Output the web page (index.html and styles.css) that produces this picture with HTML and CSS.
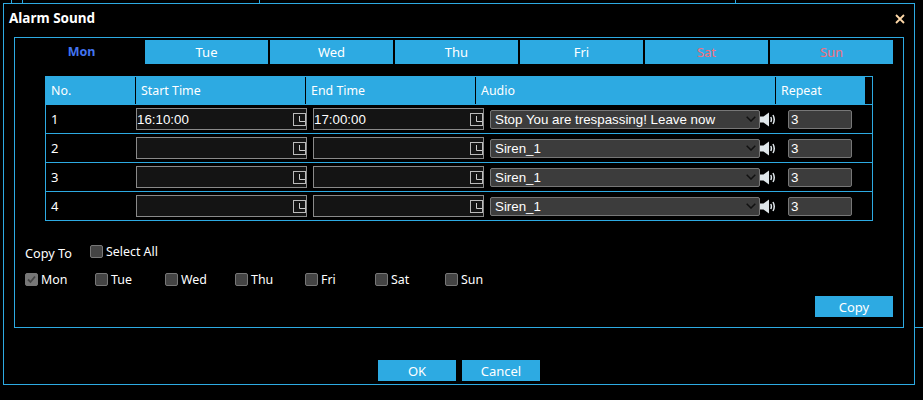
FILE: index.html
```html
<!DOCTYPE html>
<html lang="en">
<head>
<meta charset="utf-8">
<title>Alarm Sound</title>
<link rel="stylesheet" href="styles.css">
</head>
<body>
<div class="backdrop" aria-hidden="true">
  <i class="vline v1"></i><i class="vline v2"></i><i class="vline v3"></i><i class="vline v4"></i><i class="hline"></i>
</div>
<section class="dialog">
  <header class="titlebar">
    <h1 class="title">Alarm Sound</h1>
    <svg class="close" width="10" height="10" viewBox="0 0 10 10"><path d="M1 1L9 9M9 1L1 9" stroke="#ffd8a8" stroke-width="1.8" fill="none"/></svg>
  </header>
  <div class="panel">
    <nav class="tabs">
      <div class="tab active">Mon</div>
      <div class="tab">Tue</div>
      <div class="tab">Wed</div>
      <div class="tab">Thu</div>
      <div class="tab">Fri</div>
      <div class="tab weekend">Sat</div>
      <div class="tab weekend">Sun</div>
    </nav>
    <div class="table">
      <div class="thead">
        <div class="th th-no">No.</div>
        <div class="th th-time">Start Time</div>
        <div class="th th-time">End Time</div>
        <div class="th th-audio">Audio</div>
        <div class="th th-repeat">Repeat</div>
      </div>
      <div class="row">
        <div class="no">1</div>
        <div class="time"><input class="time-input" value="16:10:00"><span class="clock"><svg width="7" height="7" viewBox="0 0 7 7"><path d="M1.5 0V5.500H7" stroke="#ccc" fill="none"/></svg></span></div>
        <div class="time"><input class="time-input" value="17:00:00"><span class="clock"><svg width="7" height="7" viewBox="0 0 7 7"><path d="M1.5 0V5.500H7" stroke="#ccc" fill="none"/></svg></span></div>
        <div class="audio"><select class="audio-select"><option>Stop You are trespassing! Leave now</option></select><svg class="chevron" width="10" height="6" viewBox="0 0 10 6"><path d="M.7.7L5 5L9.3.7" stroke="#111" stroke-width="1.5" fill="none"/></svg></div>
        <svg class="speaker" width="16" height="15" viewBox="0 0 16 15"><path d="M0 4.500H3.500L9 .5V14.500L3.500 10.500H0Z" fill="#dfe6ea"/><path d="M10.800 5Q12 7.500 10.800 10M13 3Q15.500 7.500 13 12" stroke="#dfe6ea" stroke-width="1.500" fill="none"/></svg>
        <input class="repeat" value="3">
      </div>
      <div class="row">
        <div class="no">2</div>
        <div class="time"><input class="time-input" value=""><span class="clock"><svg width="7" height="7" viewBox="0 0 7 7"><path d="M1.5 0V5.500H7" stroke="#ccc" fill="none"/></svg></span></div>
        <div class="time"><input class="time-input" value=""><span class="clock"><svg width="7" height="7" viewBox="0 0 7 7"><path d="M1.5 0V5.500H7" stroke="#ccc" fill="none"/></svg></span></div>
        <div class="audio"><select class="audio-select"><option>Siren_1</option></select><svg class="chevron" width="10" height="6" viewBox="0 0 10 6"><path d="M.7.7L5 5L9.3.7" stroke="#111" stroke-width="1.5" fill="none"/></svg></div>
        <svg class="speaker" width="16" height="15" viewBox="0 0 16 15"><path d="M0 4.500H3.500L9 .5V14.500L3.500 10.500H0Z" fill="#dfe6ea"/><path d="M10.800 5Q12 7.500 10.800 10M13 3Q15.500 7.500 13 12" stroke="#dfe6ea" stroke-width="1.500" fill="none"/></svg>
        <input class="repeat" value="3">
      </div>
      <div class="row">
        <div class="no">3</div>
        <div class="time"><input class="time-input" value=""><span class="clock"><svg width="7" height="7" viewBox="0 0 7 7"><path d="M1.5 0V5.500H7" stroke="#ccc" fill="none"/></svg></span></div>
        <div class="time"><input class="time-input" value=""><span class="clock"><svg width="7" height="7" viewBox="0 0 7 7"><path d="M1.5 0V5.500H7" stroke="#ccc" fill="none"/></svg></span></div>
        <div class="audio"><select class="audio-select"><option>Siren_1</option></select><svg class="chevron" width="10" height="6" viewBox="0 0 10 6"><path d="M.7.7L5 5L9.3.7" stroke="#111" stroke-width="1.5" fill="none"/></svg></div>
        <svg class="speaker" width="16" height="15" viewBox="0 0 16 15"><path d="M0 4.500H3.500L9 .5V14.500L3.500 10.500H0Z" fill="#dfe6ea"/><path d="M10.800 5Q12 7.500 10.800 10M13 3Q15.500 7.500 13 12" stroke="#dfe6ea" stroke-width="1.500" fill="none"/></svg>
        <input class="repeat" value="3">
      </div>
      <div class="row">
        <div class="no">4</div>
        <div class="time"><input class="time-input" value=""><span class="clock"><svg width="7" height="7" viewBox="0 0 7 7"><path d="M1.5 0V5.500H7" stroke="#ccc" fill="none"/></svg></span></div>
        <div class="time"><input class="time-input" value=""><span class="clock"><svg width="7" height="7" viewBox="0 0 7 7"><path d="M1.5 0V5.500H7" stroke="#ccc" fill="none"/></svg></span></div>
        <div class="audio"><select class="audio-select"><option>Siren_1</option></select><svg class="chevron" width="10" height="6" viewBox="0 0 10 6"><path d="M.7.7L5 5L9.3.7" stroke="#111" stroke-width="1.5" fill="none"/></svg></div>
        <svg class="speaker" width="16" height="15" viewBox="0 0 16 15"><path d="M0 4.500H3.500L9 .5V14.500L3.500 10.500H0Z" fill="#dfe6ea"/><path d="M10.800 5Q12 7.500 10.800 10M13 3Q15.500 7.500 13 12" stroke="#dfe6ea" stroke-width="1.500" fill="none"/></svg>
        <input class="repeat" value="3">
      </div>
    </div>
    <div class="copy-head">
      <span class="copy-label">Copy To</span>
      <label class="check"><span class="box"></span>Select All</label>
    </div>
    <div class="copy-days">
      <label class="check day"><span class="box checked"><svg width="11" height="11" viewBox="0 0 11 11"><path d="M2 5.500L4.500 8L9 2.500" stroke="#444" stroke-width="1.800" fill="none"/></svg></span>Mon</label>
      <label class="check day"><span class="box"></span>Tue</label>
      <label class="check day"><span class="box"></span>Wed</label>
      <label class="check day"><span class="box"></span>Thu</label>
      <label class="check day"><span class="box"></span>Fri</label>
      <label class="check day"><span class="box"></span>Sat</label>
      <label class="check day"><span class="box"></span>Sun</label>
    </div>
    <div class="copy-action"><button class="btn">Copy</button></div>
  </div>
  <footer class="footer">
    <button class="btn">OK</button>
    <button class="btn">Cancel</button>
  </footer>
</section>
</body>
</html>
```
FILE: styles.css
```css
* { box-sizing: border-box; }
html, body { margin: 0; height: 400px; overflow: hidden; background: #000; }
body { position: relative; color: #fff; font: 13px "Noto Sans", "Open Sans", sans-serif; padding: 3px 0 0 3px; }

.backdrop { position: absolute; inset: 0; }
.vline { position: absolute; top: 0; width: 1px; height: 3px; background: #2daae2; }
.v1 { left: 11px; }
.v2 { left: 22px; }
.v3 { left: 259px; }
.v4 { left: 735px; }
.hline { position: absolute; left: 915px; top: 327px; width: 8px; height: 1px; background: #2daae2; }

.dialog { position: relative; width: 912px; height: 382px; border: 1px solid #2daae2; background: #000; }
.titlebar { height: 33px; display: flex; align-items: center; justify-content: space-between; padding: 0 9px 5px 5px; }
.title { margin: 0; font-size: 13.5px; font-weight: 700; line-height: 18px; }
.close { margin-top: 1px; }

.panel { width: 890px; height: 291px; margin-left: 10px; border: 1px solid #2daae2; padding: 2px 10px 0 5px; }
.tabs { display: flex; gap: 2px; }
.tab { width: 123px; height: 24px; line-height: 24px; text-align: center; background: #2daae2; }
.tab.active { background: #000; color: #4274f0; font-size: 12.5px; font-weight: 700; }
.tab.weekend { color: #f3707f; }

.table { width: 828px; margin: 12px 0 0 25px; border: 1px solid #2daae2; border-bottom: 0; }
.thead { display: flex; height: 28px; border-bottom: 1px solid #2daae2; font-size: 12.4px; }
.th { height: 27px; line-height: 27px; padding-left: 5px; background: #2daae2; border-right: 1px solid #000; }
.th-no { width: 90px; }
.th-time { width: 170px; }
.th-audio { width: 300px; }
.th-repeat { width: 89px; border-right: 0; }

.row { display: flex; align-items: center; height: 29px; border-bottom: 1px solid #2daae2; }
.no { width: 90px; padding-left: 5px; }
.time { position: relative; width: 171px; margin-right: 6px; }
.time-input { display: block; width: 100%; height: 22px; padding: 0 16px 0 0; border: 1px solid #8a8a8a; background: #141414; color: #fff; font: 13.33px "Liberation Sans", Arial, sans-serif; outline: 0; }
.clock { position: absolute; right: 1px; top: 5px; width: 13px; height: 13px; border: 1px solid #bbb; display: flex; align-items: center; }
.clock svg { display: block; margin-left: 4px; }
.audio { position: relative; width: 270px; }
.audio-select { display: block; width: 100%; height: 19px; padding: 0 16px 0 4px; border: 1px solid #777; border-radius: 2px; background: #3c3c3c; color: #fff; font: 13.33px "Liberation Sans", Arial, sans-serif; appearance: none; outline: 0; }
.chevron { position: absolute; right: 4px; top: 6px; }
.speaker { flex: none; }
.repeat { width: 64px; height: 19px; margin-left: 12px; padding: 0 2px; border: 1px solid #777; border-radius: 2px; background: #3c3c3c; color: #fff; font: 13.33px "Liberation Sans", Arial, sans-serif; outline: 0; }

.copy-head { display: flex; align-items: center; height: 16px; margin: 22px 0 0 5px; }
.copy-label { width: 65px; padding-top: 4px; font-size: 12.7px; }
.check { display: flex; align-items: center; font-size: 12.4px; }
.box { width: 13px; height: 13px; margin-right: 3px; border: 1px solid #777; border-radius: 2px; background: #444; display: flex; align-items: center; justify-content: center; }
.box.checked { background: #777; border-color: #777; }
.copy-days { display: flex; height: 16px; margin: 12px 0 0 5px; }
.day { width: 70px; }
.copy-action { display: flex; justify-content: flex-end; margin-top: 9px; }

.btn { width: 78px; height: 21px; padding: 0; border: 0; background: #2daae2; color: #fff; font: 13px "Noto Sans", "Open Sans", sans-serif; }
.footer { display: flex; justify-content: center; gap: 6px; margin-top: 32px; }
```
